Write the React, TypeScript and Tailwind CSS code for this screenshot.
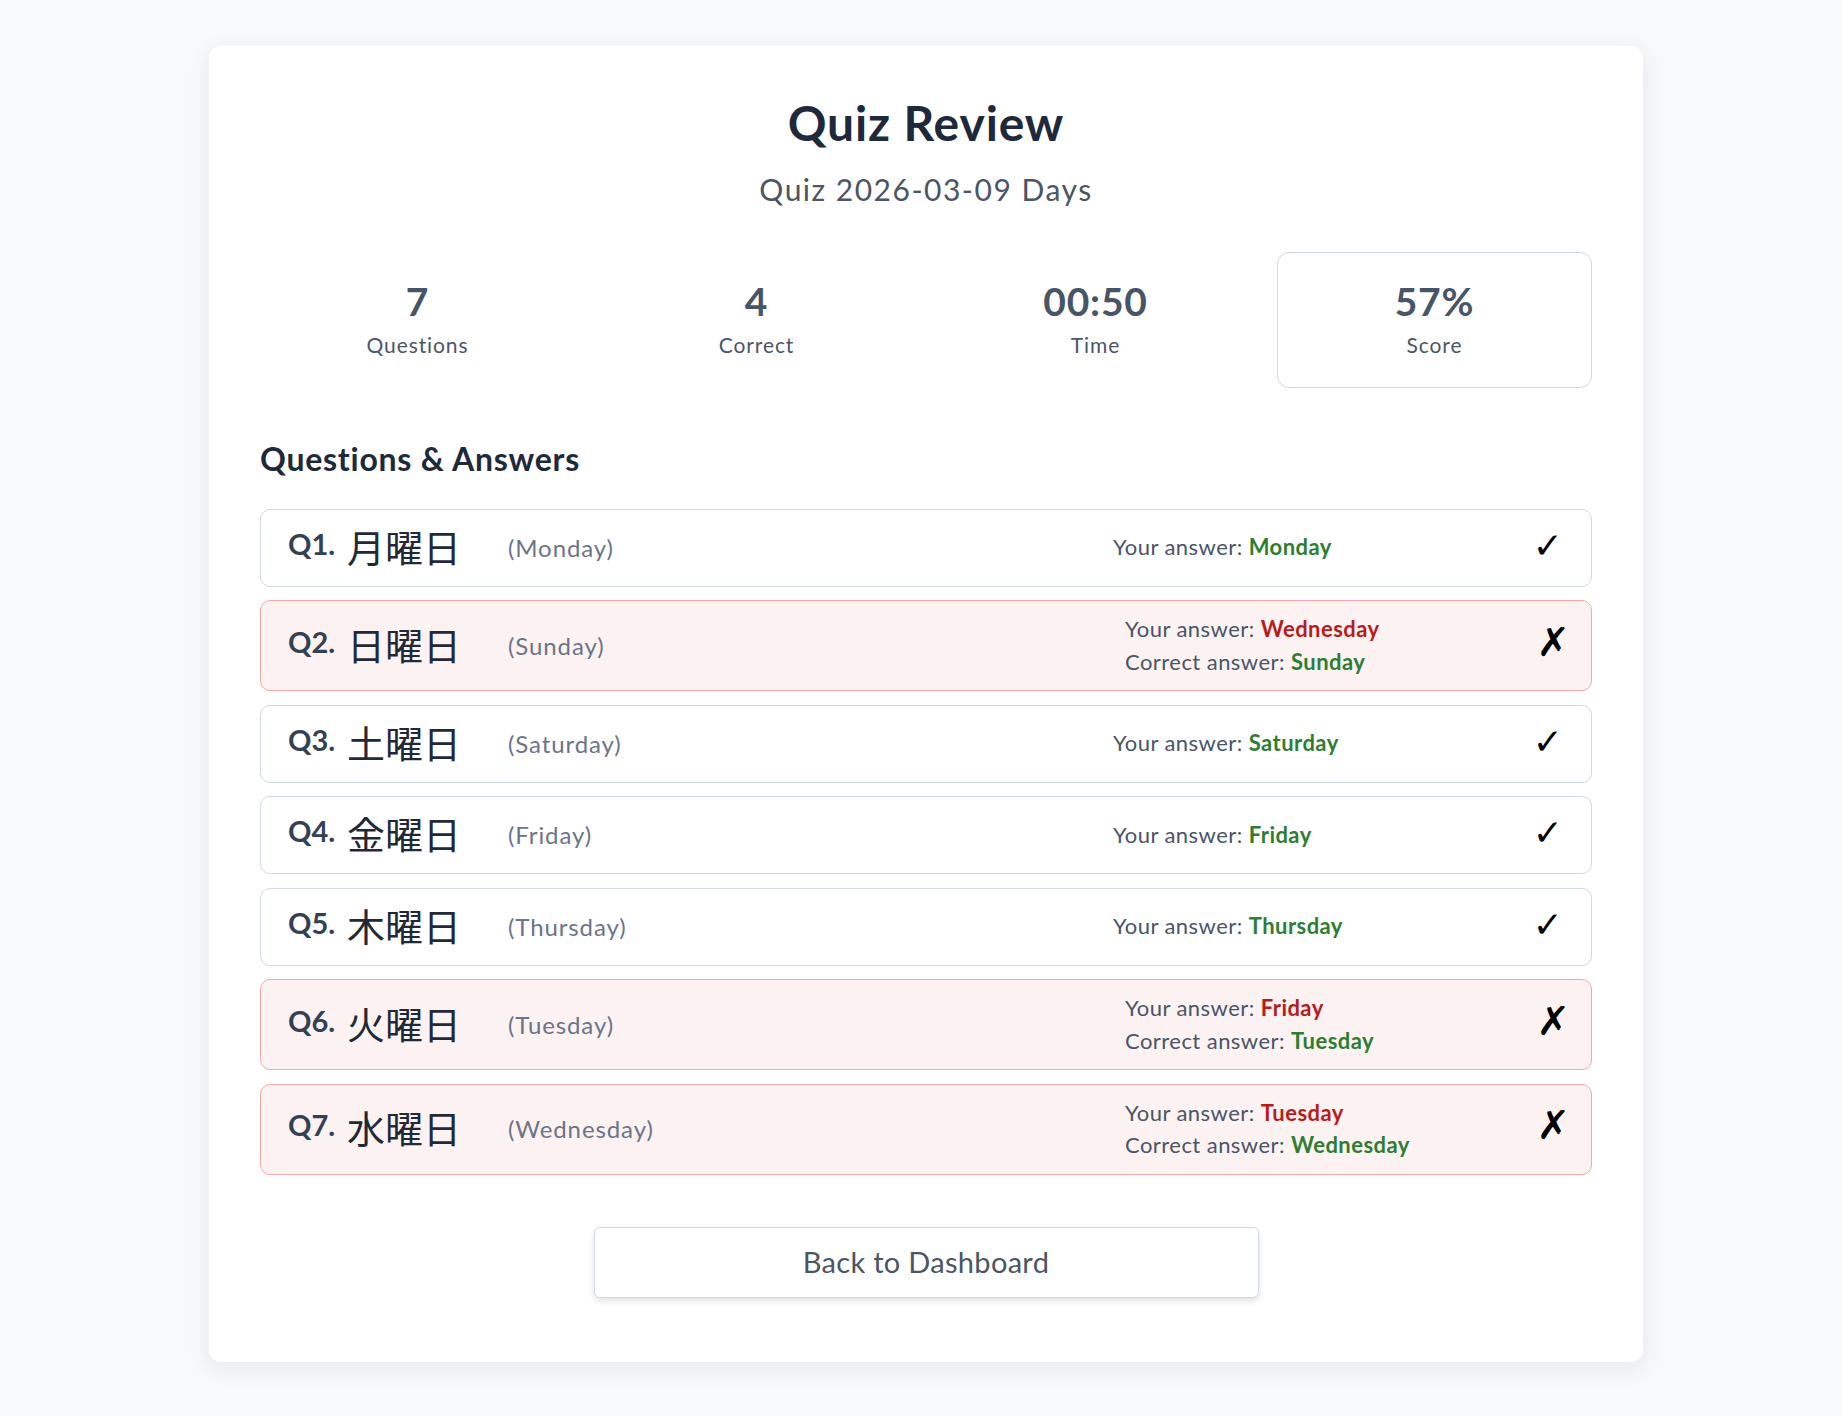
import React from "react";

type Q = {
  n: number;
  kanji: string;
  en: string;
  answer: string;
  correct: boolean;
};

const questions: Q[] = [
  { n: 1, kanji: "月曜日", en: "Monday", answer: "Monday", correct: true },
  { n: 2, kanji: "日曜日", en: "Sunday", answer: "Wednesday", correct: false },
  { n: 3, kanji: "土曜日", en: "Saturday", answer: "Saturday", correct: true },
  { n: 4, kanji: "金曜日", en: "Friday", answer: "Friday", correct: true },
  { n: 5, kanji: "木曜日", en: "Thursday", answer: "Thursday", correct: true },
  { n: 6, kanji: "火曜日", en: "Tuesday", answer: "Friday", correct: false },
  { n: 7, kanji: "水曜日", en: "Wednesday", answer: "Tuesday", correct: false },
];

const stats = [
  { value: "7", label: "Questions", boxed: false },
  { value: "4", label: "Correct", boxed: false },
  { value: "00:50", label: "Time", boxed: false },
  { value: "57%", label: "Score", boxed: true },
];

function Row({ q }: { q: Q }) {
  return (
    <div
      className={
        q.correct
          ? "flex items-center rounded-[10px] border border-[#cfd8e3] bg-white py-[12px] pl-[27px] pr-[27px]"
          : "flex items-center rounded-[10px] border border-[#f4a9a6] bg-[#fcf2f2] py-[12px] pl-[27px] pr-[27px]"
      }
    >
      <div className="w-[59px] pb-[8px] text-[29px] font-bold leading-[36px] text-[#334155]">
        Q{q.n}.
      </div>
      <div className="w-[161px] pb-[5px] font-['Noto_Sans_CJK_JP',sans-serif] text-[38px] leading-[47px] text-[#1f2937]">
        {q.kanji}
      </div>
      <div className="flex-1 text-[24px] leading-[32px] tracking-[0.9px] text-[#6b7489]">({q.en})</div>
      <div className="w-[407px] text-[22px] leading-[32.5px] tracking-[0.45px] text-[#4a5568]">
        <div>
          Your answer:{" "}
          <span className={q.correct ? "font-bold text-[#2e7d32]" : "font-bold text-[#b71c1c]"}>
            {q.answer}
          </span>
        </div>
        {!q.correct && (
          <div>
            Correct answer: <span className="font-bold text-[#2e7d32]">{q.en}</span>
          </div>
        )}
      </div>
      {q.correct ? (
        <div className="flex w-[44px] justify-end pb-[4px] pr-[1px] font-['DejaVu_Sans',sans-serif] text-[36px] leading-[40px] text-black">
          ✓
        </div>
      ) : (
        <div className="-mr-[6px] flex w-[38px] justify-end pb-[8px] font-['DejaVu_Sans',sans-serif] text-[40px] leading-[44px] text-black">
          ✗
        </div>
      )}
    </div>
  );
}

export default function App() {
  return (
    <div className="min-h-screen bg-[#f8f9fb] pb-[54px] pl-[10px] pt-[46px] font-['Lato','Noto_Sans_CJK_JP',sans-serif]">
      <div className="mx-auto w-[1434px] rounded-[12px] bg-white px-[51px] pb-[64px] pt-[48px] shadow-[0_6px_24px_rgba(15,23,42,0.08)]">
        <h1 className="text-center text-[48px] font-bold leading-[1.2] tracking-[0.85px] text-[#1e293b]">
          Quiz Review
        </h1>
        <p className="mt-[19px] text-center text-[30px] leading-[36px] tracking-[1.5px] text-[#4b5563]">
          Quiz 2026-03-09 Days
        </p>

        <div className="mt-[45px] grid grid-cols-4 gap-[24px]">
          {stats.map((s) => (
            <div
              key={s.label}
              className={
                s.boxed
                  ? "flex h-[136px] flex-col items-center justify-center gap-[5px] rounded-[12px] border border-[#cfd8e3]"
                  : "flex h-[136px] flex-col items-center justify-center gap-[5px] rounded-[12px] border border-transparent"
              }
            >
              <div className="text-[39px] font-bold leading-[45px] tracking-[0.8px] text-[#475569]">{s.value}</div>
              <div className="text-[21px] leading-[31px] tracking-[0.9px] text-[#4a5568]">{s.label}</div>
            </div>
          ))}
        </div>

        <h2 className="mt-[52px] text-[32px] font-bold leading-[38px] tracking-[0.75px] text-[#1e293b]">
          Questions &amp; Answers
        </h2>

        <div className="mt-[31px] flex flex-col gap-[13.5px]">
          {questions.map((q) => (
            <Row key={q.n} q={q} />
          ))}
        </div>

        <div className="mt-[52px] flex justify-center">
          <button className="h-[71px] w-[665px] rounded-[6px] border border-[#cfd8e3] bg-white text-[29px] tracking-[0.3px] text-[#4b5563] shadow-[0_3px_6px_rgba(15,23,42,0.12)]">
            Back to Dashboard
          </button>
        </div>
      </div>
    </div>
  );
}
